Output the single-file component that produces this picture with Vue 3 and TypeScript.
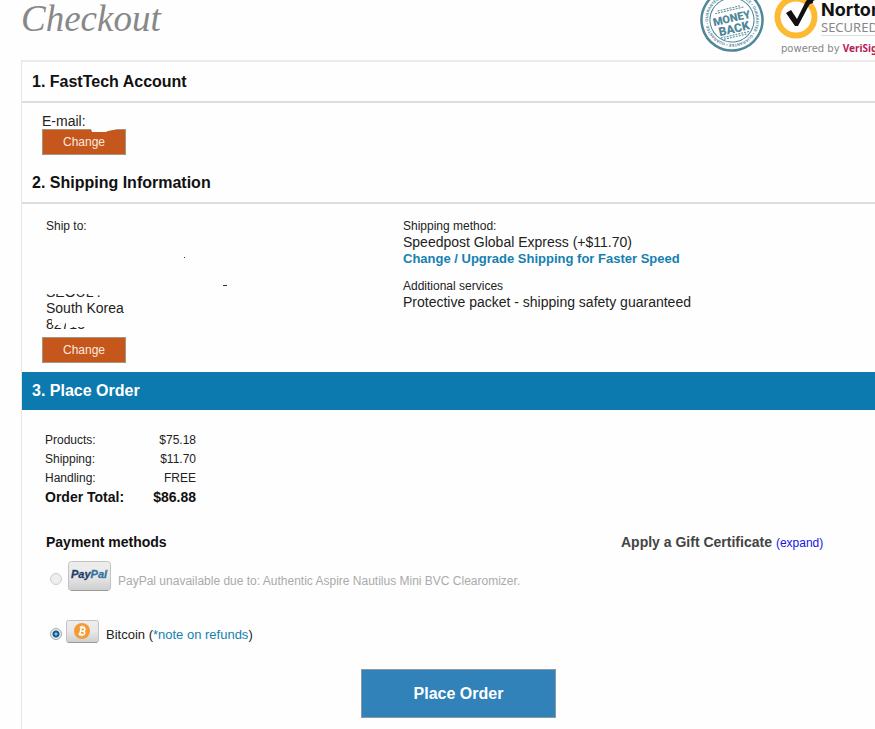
<script setup lang="ts">
import { ref } from 'vue'

const payment = ref<string>('bitcoin')
const totals: { label: string; value: string }[] = [
  { label: 'Products:', value: '$75.18' },
  { label: 'Shipping:', value: '$11.70' },
  { label: 'Handling:', value: 'FREE' },
]
</script>

<template>
  <div class="page">
    <header class="top">
      <h1>Checkout</h1>
      <div class="seals">
        <svg class="stamp" width="66" height="66" viewBox="-33 -33 66 66" role="img" aria-label="Money back guarantee">
          <defs>
            <path id="ring" d="M0 -24A24 24 0 0 1 0 24A24 24 0 0 1 0 -24" />
          </defs>
          <g transform="rotate(-13)" fill="none" stroke="#4f8799">
            <circle r="30.5" stroke-width="2.5" />
            <circle r="22" stroke-width="1" />
            <path d="M-15 -10H15M-12 -12H12M-15 15H15M-12 17H12" stroke-width="1" stroke-dasharray="2 1" />
            <g fill="#4f8799" stroke="none" font-family="Roboto" font-weight="900">
              <text font-size="4" font-family="Liberation Sans"><textPath href="#ring">GUARANTEE • GUARANTEE • GUARANTEE • GUARANTEE • GUARANTEE</textPath></text>
              <text x="0" y="2" font-size="11" text-anchor="middle">MONEY</text>
              <text x="0" y="13" font-size="12" text-anchor="middle">BACK</text>
            </g>
          </g>
        </svg>
        <div class="norton">
          <div class="norton-main">
            <svg width="44" height="44" viewBox="0 0 44 44" aria-hidden="true">
              <circle cx="22" cy="22" r="18.5" fill="#fff" stroke="#fdb930" stroke-width="6" />
              <path d="M12 18l5-3 6 9 9-18 2-2h3l1-2h3v3l-2 1v2l-3 1-2 3-10 19h-3z" fill="#111" />
            </svg>
            <div class="norton-name"><b>Norton</b><span>SECURED</span></div>
          </div>
          <p class="powered">powered by <b>VeriSign</b></p>
        </div>
      </div>
    </header>

    <main class="panel">
      <section>
        <h2>1. FastTech Account</h2>
        <div class="account">
          <span>E-mail:</span>
          <div class="button-wrap">
            <button type="button" class="change">Change</button>
            <svg class="smear" width="26" height="4" viewBox="0 0 26 4" aria-hidden="true"><path d="M0 0H26L22 1 17 2 15 3H1Z" fill="#fefefe" /></svg>
          </div>
        </div>
      </section>

      <section>
        <h2>2. Shipping Information</h2>
        <div class="shipping">
          <div class="ship-to">
            <p class="small">Ship to:</p>
            <svg class="marks" width="200" height="50" viewBox="0 0 200 50" aria-hidden="true"><path d="M138 23h1v1h-1zM177 51h4v1h-4z" fill="#333" /></svg>
            <p class="city">SEOUL .</p>
            <p>South Korea</p>
            <p class="postcode">82713</p>
          </div>
          <div class="method">
            <p class="small">Shipping method:</p>
            <p>Speedpost Global Express (+$11.70)</p>
            <a href="#shipping">Change / Upgrade Shipping for Faster Speed</a>
            <p class="small extra">Additional services</p>
            <p>Protective packet - shipping safety guaranteed</p>
          </div>
        </div>
        <button type="button" class="change ship-change">Change</button>
      </section>

      <section>
        <h2 class="active">3. Place Order</h2>
        <table class="totals">
          <tbody>
            <tr v-for="row in totals" :key="row.label">
              <th scope="row">{{ row.label }}</th>
              <td>{{ row.value }}</td>
            </tr>
          </tbody>
          <tfoot>
            <tr>
              <th scope="row">Order Total:</th>
              <td>$86.88</td>
            </tr>
          </tfoot>
        </table>

        <div class="pay-head">
          <h3>Payment methods</h3>
          <div class="gift"><h3>Apply a Gift Certificate</h3> <a href="#gift">(expand)</a></div>
        </div>

        <div class="option paypal">
          <input id="paypal" v-model="payment" type="radio" name="payment" value="paypal" disabled />
          <label for="paypal">
            <svg width="43" height="30" viewBox="0 0 43 30" role="img" aria-label="PayPal">
              <defs>
                <linearGradient id="chip" x2="0" y2="1">
                  <stop offset="0" stop-color="#eee" />
                  <stop offset="0.5" stop-color="#e8e8e8" />
                  <stop offset="1" stop-color="#cecece" />
                </linearGradient>
              </defs>
              <rect x="0.5" y="0.5" width="42" height="29" rx="3" fill="url(#chip)" stroke="#c2c2c2" />
              <path d="M3 29.5H40" stroke="#999" />
              <text x="3" y="17" font-family="Liberation Sans" font-weight="bold" font-style="italic" font-size="11" fill="#1f3d68" stroke="#1f3d68" stroke-width="0.3">Pay<tspan fill="#36729c" stroke="#36729c">Pal</tspan></text>
              <path d="M38 9.5h2" stroke="#7795ae" />
            </svg>
            <span>PayPal unavailable due to: Authentic Aspire Nautilus Mini BVC Clearomizer.</span>
          </label>
        </div>

        <div class="option bitcoin">
          <input id="bitcoin" v-model="payment" type="radio" name="payment" value="bitcoin" />
          <label for="bitcoin">
            <svg width="33" height="23" viewBox="0 0 33 23" role="img" aria-label="Bitcoin">
              <rect x="0.5" y="0.5" width="32" height="22" rx="2" fill="url(#chip)" stroke="#c2c2c2" />
              <path d="M2 22.5H31" stroke="#999" />
              <circle cx="16" cy="11" r="8" fill="#f39a35" />
              <g transform="translate(16 11) rotate(12)" fill="none" stroke="#fff">
                <path d="M-3 -3.5H.8Q2.6-3.5 2.6-1.8T.8 0H-1.5M.8 0Q3.1 0 3.1 1.8T.8 3.5H-3M-1.5-3.5V3.5" stroke-width="1.5" />
                <path d="M-1-5.5V-3.5M1-5.5V-3.5M-1 3.5V5.5M1 3.5V5.5" />
              </g>
            </svg>
            <span>Bitcoin (<a href="#refunds">*note on refunds</a>)</span>
          </label>
        </div>

        <div class="submit"><button type="submit" class="place">Place Order</button></div>
      </section>
    </main>
  </div>
</template>

<style>
body {
  background: #fefefe;
  overflow: hidden;
}
</style>

<style scoped>
.page {
  font: 14px/16px "Liberation Sans", Arial, sans-serif;
  color: #222;
}
p, h1, h2, h3 { margin: 0; }
a { text-decoration: none; color: #1580b0; }
.top {
  display: flex;
  justify-content: space-between;
  height: 60px;
  padding-left: 21px;
  overflow: hidden;
}
h1 {
  font: italic 37px/37px "Liberation Serif", Georgia, serif;
  color: #888;
}
.seals { display: flex; gap: 9px; }
.stamp { margin-top: -13px; }
.norton { width: 101px; margin-top: -5px; white-space: nowrap; }
.norton-main { display: flex; }
.norton-main svg { flex: none; }
.norton-name {
  display: flex;
  flex-direction: column;
  height: 35px;
  margin: 5px 0 0 3px;
  border-bottom: 1px solid #ddd;
}
.norton-name b { font: bold 18px/20px Inter, sans-serif; color: #111; }
.norton-name span { font: 13px/14px "Noto Sans", sans-serif; color: #888; }
.powered { padding-left: 7px; margin-top: 2px; font: 10px/14px "DejaVu Sans", sans-serif; color: #888; }
.powered b { font-family: "Noto Sans", sans-serif; color: #b51b57; }
.panel {
  margin-left: 21px;
  border-top: 2px solid #ebebeb;
  border-left: 1px solid #e5e5e5;
}
h2 {
  padding: 1px 10px 0;
  font-size: 16px;
  line-height: 38px;
  color: #111;
  border-bottom: 2px solid #ddd;
}
h2.active { padding-top: 0; background: #0c7aaf; color: #fff; border: 0; }
.account { padding: 10px 20px 8px; }
.button-wrap { position: relative; display: flex; }
.smear { position: absolute; left: 49px; top: 0; }
.change {
  width: 84px;
  height: 26px;
  padding: 0;
  border: 1px solid #a3957f;
  background: #c5561c;
  color: #fbe9df;
  font: 12px/16px "Liberation Sans", Arial, sans-serif;
}
.shipping { display: grid; grid-template-columns: 357px 1fr; padding: 14px 24px 0; }
.small { font-size: 12px; }
.marks { display: block; overflow: visible; }
.city { clip-path: polygon(0 10px, 100% 10px, 100% 100%, 0 100%); }
.postcode {
  clip-path: polygon(0 0, 6px 0, 6px 9px, 14px 9px, 14px 7px, 20px 7px, 20px 11px, 50px 11px, 50px 100%, 0 100%);
}
.method a { font-weight: bold; font-size: 13px; }
.extra { margin-top: 11px; }
.ship-change { display: block; margin: 5px 0 9px 20px; }
.totals {
  width: 151px;
  margin: 21px 0 0 23px;
  border-collapse: collapse;
  font-size: 12px;
  line-height: 19px;
}
th, td { padding: 0; font-weight: normal; text-align: left; }
td { text-align: right; }
tfoot th, tfoot td { font-size: 14px; font-weight: bold; color: #111; }
.pay-head { display: flex; margin: 27px 24px 0; }
h3 { font-size: 14px; line-height: 16px; color: #111; }
.pay-head > h3 { width: 575px; }
.gift { display: flex; gap: 4px; }
.gift h3 { color: #444; }
.gift a { font-size: 12px; line-height: 18px; color: #1414e6; }
.option { display: flex; align-items: center; margin-left: 28px; font-size: 12px; }
.option label { display: flex; align-items: center; gap: 7px; }
.paypal { margin-top: 9px; color: #aaa; }
.paypal label span { padding-top: 10px; }
.bitcoin { margin-top: 28px; font-size: 13px; }
.bitcoin label span { padding-top: 8px; }
input {
  appearance: none;
  width: 12px;
  height: 12px;
  margin: 6px 6px 0 0;
  border: 1px solid #aaa;
  border-radius: 50%;
  background: #eee;
}
.bitcoin input { margin-right: 4px; }
input:disabled { border-color: #ccc; }
input:checked { background: radial-gradient(circle, #78c6ee 0 1px, #17598a 2px 3px, #e4edf3 4px); }
.submit { display: flex; padding: 26px 0 12px 339px; }
.place {
  width: 195px;
  height: 49px;
  border: 1px solid #8b9a9d;
  background: #3082b9;
  color: #fff;
  font: bold 16px/20px "Liberation Sans", Arial, sans-serif;
}
</style>
